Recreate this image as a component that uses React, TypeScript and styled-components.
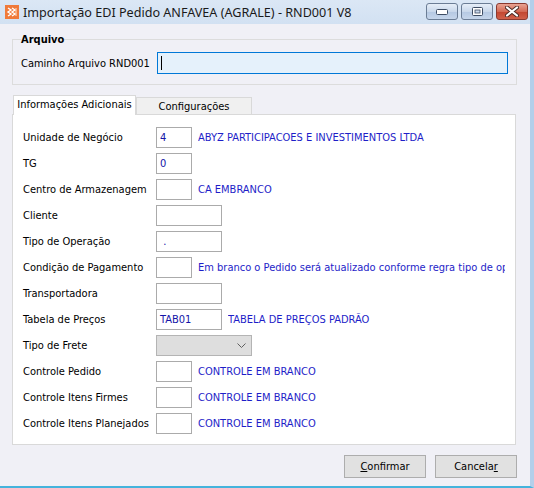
import React from 'react';
import styled, { createGlobalStyle } from 'styled-components';

const GlobalStyle = createGlobalStyle`
  body {
    margin: 0;
    background: #ffffff;
  }
  * {
    box-sizing: border-box;
  }
`;

const Window = styled.div`
  width: 534px;
  height: 488px;
  display: flex;
  flex-direction: column;
  background: #f0f0f6;
  border-right: 4px solid #b4cfea;
  border-bottom: 2px solid #45b3dc;
  font-family: "DejaVu Sans Condensed", "Liberation Sans", Arial, sans-serif;
  font-size: 11px;
  color: #000;
  overflow: hidden;
`;

const TitleBar = styled.div`
  height: 24px;
  flex: none;
  display: flex;
  align-items: center;
  padding-left: 5px;
  background: linear-gradient(#dbe7f5, #d2e1f2);
`;

const TitleText = styled.span`
  margin-left: 4px;
  font-family: "Noto Sans", "Open Sans", sans-serif;
  font-size: 12.6px;
  color: #1a1a1a;
  flex: 1;
`;

const Controls = styled.div`
  display: flex;
  gap: 3px;
  margin-right: 2px;
  align-self: flex-start;
  margin-top: 3px;
`;

const CtrlButton = styled.div<{ $close?: boolean }>`
  width: 32px;
  height: 17px;
  border: 1px solid ${(p) => (p.$close ? '#8a3a30' : '#6b7d95')};
  border-radius: 3px;
  display: flex;
  align-items: center;
  justify-content: center;
  background: ${(p) =>
    p.$close
      ? 'linear-gradient(#e9a393, #d36a55 50%, #c2452f 51%, #d0604a)'
      : 'linear-gradient(#e6eef8, #c9d8eb 50%, #b4c8e2 51%, #c6d6eb)'};
`;

const Body = styled.div`
  flex: 1;
  display: flex;
  flex-direction: column;
  padding: 9px 13px 0 12px;
`;

const Group = styled.fieldset`
  margin: 0;
  padding: 6px 8px 10px 8px;
  border: 1px solid #dcdcdc;
  min-width: 0;
`;

const GroupTitle = styled.legend`
  padding: 0;
  font-weight: bold;
  font-size: 11px;
`;

const PathRow = styled.div`
  display: flex;
  align-items: center;
`;

const PathLabel = styled.span`
  width: 136px;
  flex: none;
`;

const PathInput = styled.div`
  width: 352px;
  height: 22px;
  border: 1px solid #0078d7;
  background: #e5f1fb;
  display: flex;
  align-items: center;
  padding-left: 3px;
`;

const Caret = styled.span`
  width: 1px;
  height: 14px;
  background: #000;
`;

const TabStrip = styled.div`
  display: flex;
  align-items: flex-end;
  height: 20px;
  margin-top: 10px;
  padding-left: 1px;
  position: relative;
  z-index: 1;
`;

const Tab = styled.div<{ $active?: boolean }>`
  height: ${(p) => (p.$active ? 20 : 17)}px;
  width: ${(p) => (p.$active ? 123 : 116)}px;
  margin-bottom: ${(p) => (p.$active ? 0 : 1)}px;
  border: 1px solid #d9d9d9;
  border-bottom: none;
  background: ${(p) => (p.$active ? '#ffffff' : '#f0f0f0')};
  display: flex;
  align-items: center;
  justify-content: center;
  padding-bottom: ${(p) => (p.$active ? 2 : 0)}px;
`;

const Panel = styled.div`
  margin-top: -1px;
  width: 504px;
  height: 331px;
  border: 1px solid #d9d9d9;
  background: #ffffff;
  padding: 12px 10px 10px 10px;
  display: flex;
  flex-direction: column;
  gap: 5px;
`;

const Row = styled.div`
  display: flex;
  align-items: center;
  height: 21px;
`;

const Label = styled.span`
  width: 133px;
  flex: none;
  white-space: nowrap;
`;

const Field = styled.div<{ $wide?: boolean }>`
  width: ${(p) => (p.$wide ? 66 : 36)}px;
  height: 21px;
  flex: none;
  border: 1px solid #ababab;
  background: #fff;
  display: flex;
  align-items: center;
  padding-left: 3px;
  color: #1414a8;
`;

const Select = styled.div`
  width: 96px;
  height: 21px;
  flex: none;
  border: 1px solid #b4b4b4;
  background: #dedede;
  display: flex;
  align-items: center;
  justify-content: flex-end;
  padding-right: 5px;
`;

const Desc = styled.span`
  margin-left: 6px;
  color: #1e1ec8;
  white-space: nowrap;
  overflow: hidden;
  min-width: 0;
  flex: 1;
`;

const Footer = styled.div`
  display: flex;
  justify-content: flex-end;
  gap: 9px;
  margin-top: 10px;
`;

const Button = styled.div`
  width: 82px;
  height: 23px;
  border: 1px solid #adadad;
  background: #e1e1e1;
  display: flex;
  align-items: center;
  justify-content: center;
`;

type RowDef = {
  label: string;
  kind: 'short' | 'wide' | 'select';
  value?: string;
  desc?: string;
};

const rows: RowDef[] = [
  { label: 'Unidade de Negócio', kind: 'short', value: '4', desc: 'ABYZ PARTICIPACOES E INVESTIMENTOS LTDA' },
  { label: 'TG', kind: 'short', value: '0' },
  { label: 'Centro de Armazenagem', kind: 'short', desc: 'CA EMBRANCO' },
  { label: 'Cliente', kind: 'wide' },
  { label: 'Tipo de Operação', kind: 'wide', value: '\u00a0.' },
  { label: 'Condição de Pagamento', kind: 'short', desc: 'Em branco o Pedido será atualizado conforme regra tipo de operação' },
  { label: 'Transportadora', kind: 'wide' },
  { label: 'Tabela de Preços', kind: 'wide', value: 'TAB01', desc: 'TABELA DE PREÇOS PADRÃO' },
  { label: 'Tipo de Frete', kind: 'select' },
  { label: 'Controle Pedido', kind: 'short', desc: 'CONTROLE EM BRANCO' },
  { label: 'Controle Itens Firmes', kind: 'short', desc: 'CONTROLE EM BRANCO' },
  { label: 'Controle Itens Planejados', kind: 'short', desc: 'CONTROLE EM BRANCO' },
];

const AppIcon = () => (
  <svg width="14" height="14" viewBox="0 0 14 14">
    <rect width="14" height="14" fill="#f07a3a" />
    <path d="M3 3 L6 5 L3 7 L6 9 L3 11" stroke="#fff" strokeWidth="1.4" fill="none" />
    <path d="M7 3 L10 5 L7 7 L10 9 L7 11" stroke="#fff" strokeWidth="1.4" fill="none" />
    <path d="M11 3 V11" stroke="#fde0c8" strokeWidth="1" />
  </svg>
);

const Chevron = () => (
  <svg width="9" height="6" viewBox="0 0 9 6">
    <path d="M0.5 0.5 L4.5 4.5 L8.5 0.5" stroke="#606060" strokeWidth="1" fill="none" />
  </svg>
);

const App: React.FC = () => {
  return (
    <>
      <GlobalStyle />
      <Window>
        <TitleBar>
          <AppIcon />
          <TitleText>Importação EDI Pedido ANFAVEA (AGRALE) - RND001 V8</TitleText>
          <Controls>
            <CtrlButton>
              <svg width="12" height="6" viewBox="0 0 12 6">
                <rect x="0.5" y="0.5" width="11" height="5" rx="1" fill="#fff" stroke="#3d4c63" />
              </svg>
            </CtrlButton>
            <CtrlButton>
              <svg width="11" height="9" viewBox="0 0 11 9">
                <rect x="0.5" y="0.5" width="10" height="8" rx="1" fill="#fff" stroke="#3d4c63" />
                <rect x="3" y="3" width="5" height="3" fill="#c9d8eb" stroke="#3d4c63" strokeWidth="0.8" />
              </svg>
            </CtrlButton>
            <CtrlButton $close>
              <svg width="14" height="11" viewBox="0 0 14 11">
                <path d="M2 1.5 L12 9.5 M12 1.5 L2 9.5" stroke="#4a2a25" strokeWidth="4" strokeLinecap="round" />
                <path d="M2 1.5 L12 9.5 M12 1.5 L2 9.5" stroke="#ffffff" strokeWidth="2.2" strokeLinecap="round" />
              </svg>
            </CtrlButton>
          </Controls>
        </TitleBar>
        <Body>
          <Group>
            <GroupTitle>Arquivo</GroupTitle>
            <PathRow>
              <PathLabel>Caminho Arquivo RND001</PathLabel>
              <PathInput>
                <Caret />
              </PathInput>
            </PathRow>
          </Group>
          <TabStrip>
            <Tab $active>Informações Adicionais</Tab>
            <Tab>Configurações</Tab>
          </TabStrip>
          <Panel>
            {rows.map((r) => (
              <Row key={r.label}>
                <Label>{r.label}</Label>
                {r.kind === 'select' ? (
                  <Select>
                    <Chevron />
                  </Select>
                ) : (
                  <Field $wide={r.kind === 'wide'}>{r.value}</Field>
                )}
                {r.desc && <Desc>{r.desc}</Desc>}
              </Row>
            ))}
          </Panel>
          <Footer>
            <Button>
              <span>
                <u>C</u>onfirmar
              </span>
            </Button>
            <Button>
              <span>
                Cancela<u>r</u>
              </span>
            </Button>
          </Footer>
        </Body>
      </Window>
    </>
  );
};

export default App;
